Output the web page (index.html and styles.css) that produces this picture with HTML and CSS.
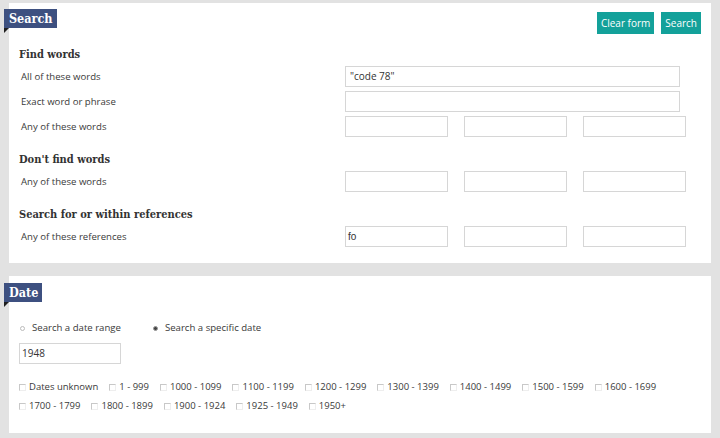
FILE: index.html
```html
<!DOCTYPE html>
<html>
<head>
<meta charset="utf-8">
<link rel="stylesheet" href="styles.css">
</head>
<body>
<div class="page">
  <section class="panel panel-search">
    <div class="panel-head">
      <div class="tab">Search</div>
      <div class="actions">
        <button class="btn">Clear form</button>
        <button class="btn">Search</button>
      </div>
    </div>

    <h3 class="group-title first">Find words</h3>
    <div class="field">
      <div class="label">All of these words</div>
      <div class="inputs"><div class="input wide">"code 78"</div></div>
    </div>
    <div class="field">
      <div class="label">Exact word or phrase</div>
      <div class="inputs"><div class="input wide"></div></div>
    </div>
    <div class="field">
      <div class="label">Any of these words</div>
      <div class="inputs"><div class="input"></div><div class="input"></div><div class="input"></div></div>
    </div>

    <h3 class="group-title">Don't find words</h3>
    <div class="field">
      <div class="label">Any of these words</div>
      <div class="inputs"><div class="input"></div><div class="input"></div><div class="input"></div></div>
    </div>

    <h3 class="group-title">Search for or within references</h3>
    <div class="field">
      <div class="label">Any of these references</div>
      <div class="inputs"><div class="input mono">fo</div><div class="input"></div><div class="input"></div></div>
    </div>
  </section>

  <section class="panel panel-date">
    <div class="panel-head">
      <div class="tab">Date</div>
    </div>
    <div class="radios">
      <label class="radio"><span class="dot"></span>Search a date range</label>
      <label class="radio"><span class="dot on"></span>Search a specific date</label>
    </div>
    <div class="input date">1948</div>
    <div class="checks">
      <label class="check"><span class="box"></span>Dates unknown</label>
      <label class="check"><span class="box"></span>1 - 999</label>
      <label class="check"><span class="box"></span>1000 - 1099</label>
      <label class="check"><span class="box"></span>1100 - 1199</label>
      <label class="check"><span class="box"></span>1200 - 1299</label>
      <label class="check"><span class="box"></span>1300 - 1399</label>
      <label class="check"><span class="box"></span>1400 - 1499</label>
      <label class="check"><span class="box"></span>1500 - 1599</label>
      <label class="check"><span class="box"></span>1600 - 1699</label>
      <label class="check"><span class="box"></span>1700 - 1799</label>
      <label class="check"><span class="box"></span>1800 - 1899</label>
      <label class="check"><span class="box"></span>1900 - 1924</label>
      <label class="check"><span class="box"></span>1925 - 1949</label>
      <label class="check"><span class="box"></span>1950+</label>
    </div>
  </section>
</div>
</body>
</html>
```

FILE: styles.css
```css
html, body {
  margin: 0;
  padding: 0;
  background: #e2e2e2;
}
body {
  width: 720px;
  height: 438px;
  overflow: hidden;
  font-family: "Open Sans", "Liberation Sans", sans-serif;
  color: #333;
}
.page {
  padding: 3px 9px 0 9px;
  display: flex;
  flex-direction: column;
  gap: 13px;
}
.panel {
  background: #fff;
  padding: 6px 10px 16px 10px;
}
.panel-head {
  display: flex;
  justify-content: space-between;
  align-items: flex-start;
  margin-left: -15px;
}
.tab {
  position: relative;
  background: #3d5080;
  color: #fff;
  font-family: "DejaVu Serif Condensed", "DejaVu Serif", serif;
  font-stretch: condensed;
  font-weight: bold;
  font-size: 12.5px;
  height: 19px;
  line-height: 19px;
  padding: 0 4px 0 5px;
}
.tab::after {
  content: "";
  position: absolute;
  left: 0;
  top: 19px;
  border-top: 5px solid #1f1f1f;
  border-right: 5px solid transparent;
}
.actions {
  display: flex;
  gap: 7px;
  margin-top: 3px;
}
.btn {
  background: #13a19a;
  color: #fff;
  border: none;
  font-family: "Open Sans", sans-serif;
  font-size: 10px;
  height: 22px;
  padding: 0 4px;
  margin: 0;
}
.group-title {
  font-family: "DejaVu Serif Condensed", "DejaVu Serif", serif;
  font-stretch: condensed;
  font-weight: bold;
  font-size: 11px;
  line-height: 16px;
  height: 16px;
  margin: 15px 0 3px 0;
  color: #333;
}
.group-title.first {
  margin-top: 13px;
}
.field {
  display: flex;
  align-items: center;
  margin-bottom: 4px;
}
.field:last-child {
  margin-bottom: 0;
}
.label {
  width: 324px;
  padding-left: 2px;
  font-size: 9.6px;
  color: #3a3a3a;
}
.inputs {
  display: flex;
  gap: 16px;
}
.input {
  box-sizing: border-box;
  height: 21px;
  width: 103px;
  border: 1px solid #d6d6d6;
  font-family: "Open Sans", sans-serif;
  font-size: 10px;
  line-height: 19px;
  padding-left: 4px;
  color: #333;
}
.input.wide {
  width: 335px;
}
.input.mono {
  font-family: "Liberation Sans", sans-serif;
  padding-left: 2px;
}
.panel-date {
  padding-top: 7px;
  padding-bottom: 19px;
}
.radios {
  display: flex;
  gap: 31px;
  margin-top: 18px;
  font-size: 9.6px;
  line-height: 16px;
  color: #3a3a3a;
}
.radio, .check {
  display: flex;
  align-items: center;
}
.dot {
  width: 5px;
  height: 5px;
  border-radius: 50%;
  border: 1px solid #bbb;
  margin: 0 7px 0 1px;
  box-sizing: border-box;
}
.dot.on {
  background: #444;
  border-color: #999;
}
.input.date {
  margin-top: 7px;
  width: 102px;
  padding-left: 2px;
}
.checks {
  margin-top: 15px;
  display: flex;
  flex-wrap: wrap;
  row-gap: 3px;
  column-gap: 11px;
  font-size: 9.5px;
  line-height: 16px;
  width: 680px;
  color: #3a3a3a;
}
.box {
  width: 7px;
  height: 7px;
  box-sizing: border-box;
  border: 1px solid #c8c8c8;
  border-right-color: #eee;
  border-bottom-color: #eee;
  margin-right: 3px;
}
```
